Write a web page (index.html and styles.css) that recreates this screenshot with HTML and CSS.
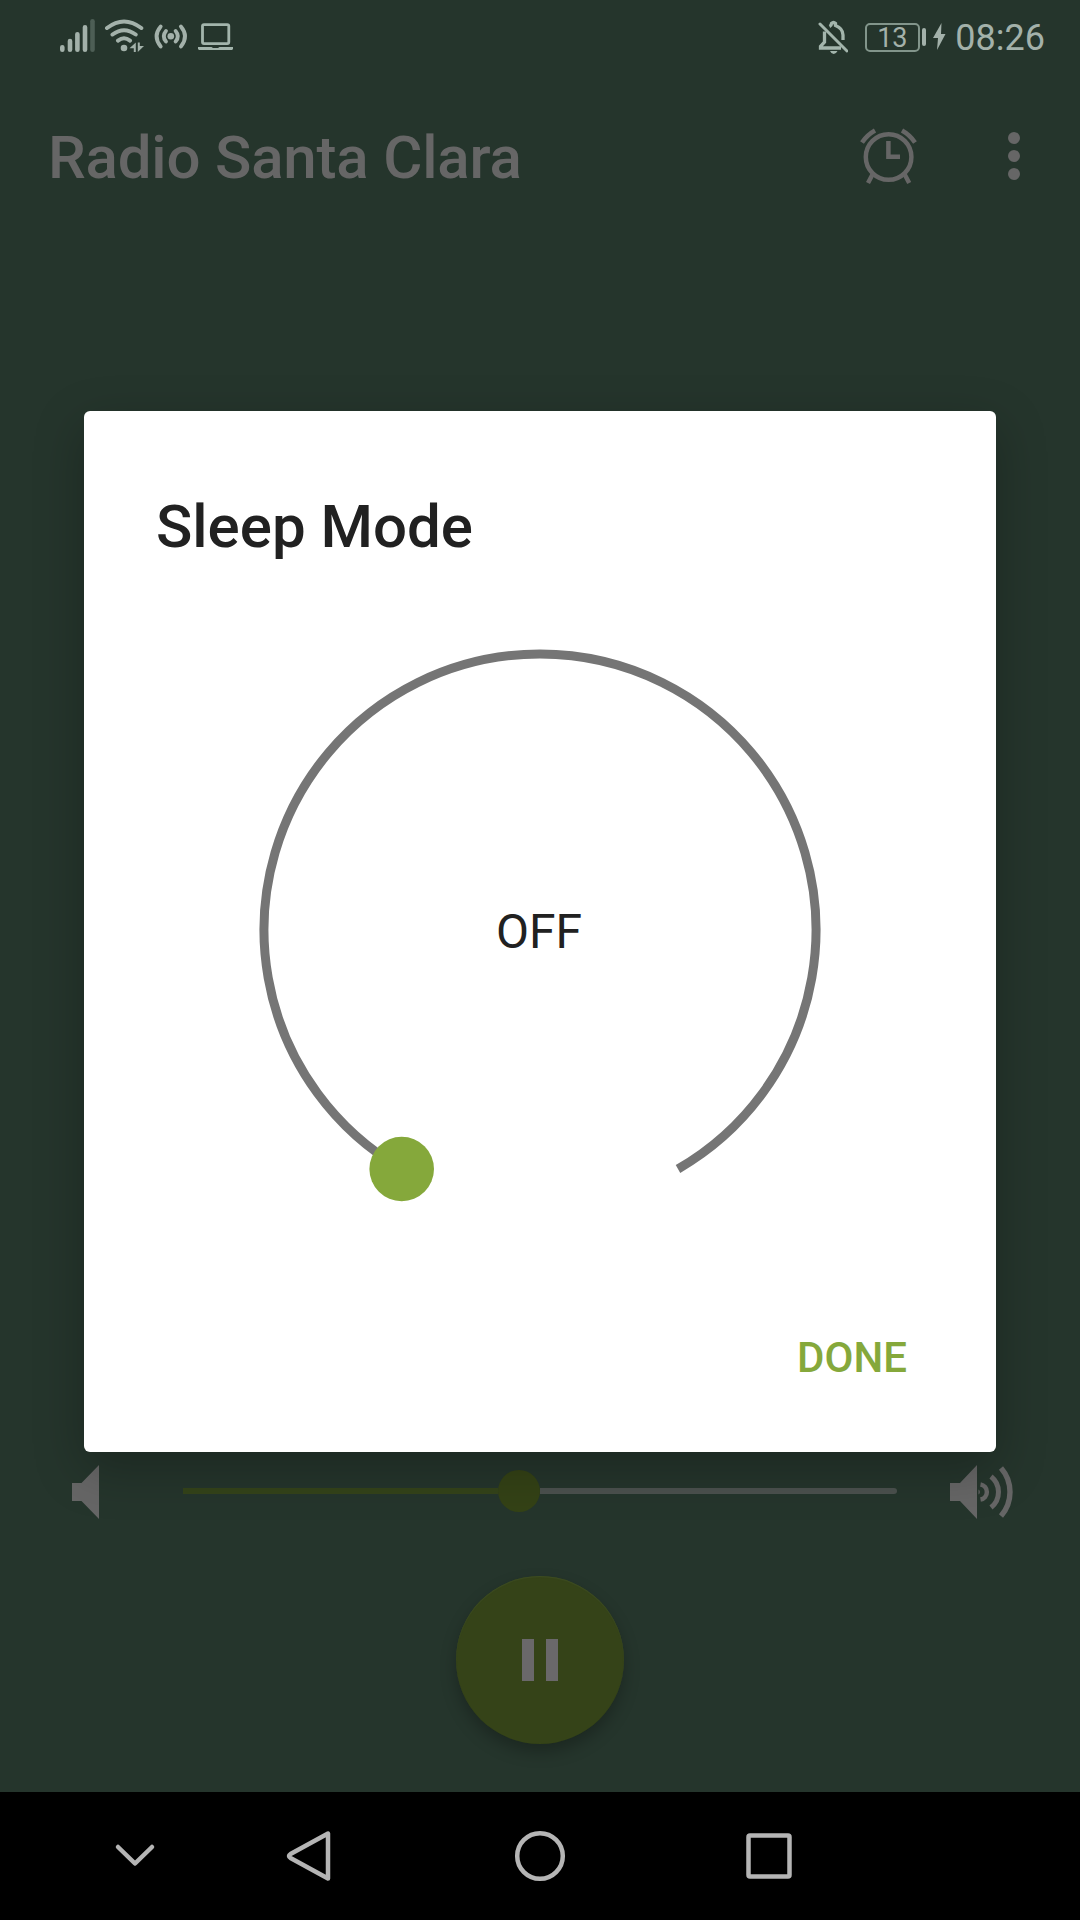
FILE: index.html
```
<!DOCTYPE html>
<html lang="en">
<head>
  <meta charset="UTF-8">
  <meta name="viewport" content="width=device-width, initial-scale=1.0">
  <title>Radio Santa Clara</title>
  <link rel="stylesheet" href="styles.css">
</head>
<body>
  <div class="screen">
    <div class="statusbar">
      <svg class="status-left" width="180" height="44" viewBox="58 14 180 44">
        <!-- signal -->
        <g stroke="#a3b1aa" stroke-width="4.6" stroke-linecap="round">
          <path d="M62.3 47.2V49.7M70 41V49.7M77.4 34.3V49.7M85 27.3V49.7"/>
          <path d="M92.5 21.3V49.7" stroke="#4d5e55"/>
        </g>
        <!-- wifi -->
        <g fill="none" stroke="#a3b1aa" stroke-width="4" stroke-linecap="round">
          <path d="M107 28Q124 15 141.3 28M112.5 34.5Q124 26 135.7 34.5M118 40.6Q124 36 130 40.6"/>
        </g>
        <circle cx="124" cy="48" r="3.3" fill="#a3b1aa"/>
        <path d="M129.5 48.3L135.8 42.5V52H133.8V48.3ZM137.8 42.5H139.8V46H144L137.8 52Z" fill="#a3b1aa"/>
        <!-- hotspot -->
        <circle cx="170.8" cy="36.3" r="3.3" fill="#a3b1aa"/>
        <g fill="none" stroke="#a3b1aa" stroke-width="3.8" stroke-linecap="round">
          <path d="M166 31Q161.5 36.3 166 41.6M175.6 31Q180.1 36.3 175.6 41.6"/>
          <path d="M160.7 26.5Q152.4 36.3 160.7 46.5M180.9 26.5Q189.2 36.3 180.9 46.5"/>
        </g>
        <!-- laptop -->
        <rect x="202.5" y="24.6" width="26.3" height="19" rx="1.5" fill="none" stroke="#a3b5ac" stroke-width="2.8"/>
        <path d="M198 47H211.5L213 48H218L219.5 47H233V49L232 50H199L198 49Z" fill="#a3b5ac"/>
      </svg>
      <div class="status-right">
        <svg width="30" height="36" viewBox="817 18 30 36">
          <g fill="none" stroke="#a3b5ac" stroke-width="3.3">
            <path d="M823.5 30.5V41L819.5 45.5V47H840M828.5 25.5Q830.5 24.5 830.5 22.5Q832.5 20.5 834.5 22.5V24.5Q842 27.5 842 34V39"/>
            <path d="M819 23L846 50" stroke-linecap="round" stroke-width="3"/>
          </g>
          <path d="M829 50H836.5Q835 53 832.7 53Q830.3 53 829 50Z" fill="#a3b5ac"/>
        </svg>
        <div class="battery">13</div>
        <div class="battery-tip"></div>
        <svg class="bolt" width="13" height="28" viewBox="0 0 13 28"><path d="M8.5 0L0 15H5L4 27L12.5 11H8Z" fill="#a3b1aa"/></svg>
        <div class="time">08:26</div>
      </div>
    </div>

    <div class="toolbar">
      <h1>Radio Santa Clara</h1>
      <svg class="alarm" width="58" height="58" viewBox="860 127 58 58">
        <g fill="none" stroke="#666" stroke-width="4.5">
          <circle cx="888.6" cy="157" r="22.8"/>
          <path d="M888.4 141V156.8H900"/>
          <path d="M862 142.5Q867 135 875 130.5M902 130.5Q910 135 915 142.5"/>
          <path d="M872.5 174.5L868 183M904.7 174.5L909.2 183"/>
        </g>
      </svg>
      <div class="menu"><span></span><span></span><span></span></div>
    </div>

    <div class="player">
      <div class="volume">
        <svg class="vol-low" width="27" height="54" viewBox="0 0 27 54"><path d="M0 18H9.5L27 0V54L9.5 36H0Z" fill="#666"/></svg>
        <div class="slider">
          <div class="slider-fill"></div>
          <div class="slider-thumb"></div>
          <div class="slider-rest"></div>
        </div>
        <svg class="vol-high" width="65" height="54" viewBox="0 0 65 54">
          <path d="M0 18H10L27 0V54L10 36H0Z" fill="#666"/>
          <g fill="none" stroke="#666" stroke-width="5">
            <path d="M30.5 19.5A7.6 7.6 0 0 1 30.5 34.5" stroke-width="4.5"/>
            <path d="M41 11.5A19.8 19.8 0 0 1 41 42.5"/>
            <path d="M51 3A36.5 36.5 0 0 1 51 51" stroke-width="5.4"/>
          </g>
          <path d="M28.5 24.5A3 3 0 0 1 28.5 29.5Z" fill="#666"/>
        </svg>
      </div>
      <div class="play"><i></i><i></i></div>
    </div>

    <div class="navbar">
      <svg width="42" height="26" viewBox="0 0 42 26"><path d="M4 4L21 20.5L38 4"/></svg>
      <svg width="48" height="54" viewBox="0 0 48 54"><path d="M43 4.5V49.5L5.5 29Q2.5 27 5.5 25Z"/></svg>
      <svg width="54" height="54" viewBox="0 0 54 54"><circle cx="27" cy="27" r="22.8"/></svg>
      <svg width="50" height="50" viewBox="0 0 50 50"><rect x="4.5" y="4.5" width="41" height="41" rx="1.5"/></svg>
    </div>
  </div>

  <div class="overlay">
    <div class="dialog">
      <h2>Sleep Mode</h2>
      <div class="dial">
        <svg width="570" height="570" viewBox="255 645 570 570">
          <path d="M402 1169A276 276 0 1 1 678 1169" fill="none" stroke="#757575" stroke-width="9"/>
          <circle cx="401.7" cy="1169" r="32.3" fill="#85a83b"/>
        </svg>
        <span class="dial-value">OFF</span>
      </div>
      <div class="actions"><button type="button">DONE</button></div>
    </div>
  </div>
</body>
</html>
```
FILE: styles.css
```
* { box-sizing: border-box; }
body {
  margin: 0;
  background-color: #25352c;
  font-family: Roboto, "Liberation Sans", sans-serif;
}
svg { display: block; flex: none; }
h1, h2 {
  margin: 0;
  font-size: 60px;
  font-weight: 500;
  line-height: 70px;
}
.screen {
  display: flex;
  flex-direction: column;
  width: 1080px;
  height: 1920px;
}

/* status bar */
.statusbar {
  display: flex;
  justify-content: space-between;
  height: 72px;
  padding: 14px 35px 0 58px;
  color: #a3b1aa;
}
.status-right {
  display: flex;
  align-items: center;
  height: 46px;
}
.battery {
  width: 55px;
  height: 29px;
  margin-left: 17px;
  border: 2px solid #82958b;
  border-radius: 5px;
  font-size: 27px;
  line-height: 26px;
  text-align: center;
}
.battery-tip {
  width: 4.5px;
  height: 18px;
  margin-left: 2px;
  border-radius: 2px;
  background-color: #a3b1aa;
}
.bolt { margin: 0 9px 0 7px; }
.time {
  padding-top: 2px;
  font-size: 36px;
  line-height: 42px;
}

/* toolbar */
.toolbar {
  display: flex;
  align-items: center;
  height: 168px;
  padding: 0 60px 0 48px;
  color: #666;
}
.toolbar h1 {
  padding-top: 4px;
  letter-spacing: -0.19px;
}
.alarm { margin-left: auto; }
.menu {
  display: flex;
  flex-direction: column;
  gap: 5.6px;
  margin-left: 90px;
}
.menu span {
  width: 12.4px;
  height: 12.4px;
  border-radius: 50%;
  background-color: #666;
}

/* player */
.player {
  flex: 1;
  display: flex;
  flex-direction: column;
  align-items: center;
  justify-content: flex-end;
  padding-bottom: 48px;
}
.volume {
  display: flex;
  align-items: center;
  width: 100%;
  padding: 0 65px 0 72px;
  margin-bottom: 57px;
}
.slider {
  flex: 1;
  display: flex;
  align-items: center;
  margin: 0 53px 2px 84px;
}
.slider-fill {
  width: 315px;
  height: 6px;
  background-color: #34431a;
}
.slider-thumb {
  width: 42px;
  height: 42px;
  border-radius: 50%;
  background-color: #344216;
}
.slider-rest {
  flex: 1;
  height: 6px;
  border-radius: 0 3px 3px 0;
  background-color: #4b514e;
}
.play {
  display: flex;
  align-items: center;
  justify-content: center;
  gap: 12px;
  width: 168px;
  height: 168px;
  border-radius: 50%;
  background-color: #354318;
  box-shadow: 0 8px 16px rgba(0, 0, 0, 0.25), inset 0 1px 1px #3d4c23;
}
.play i {
  width: 12px;
  height: 42px;
  background-color: #6a686a;
}

/* android buttons */
.navbar {
  display: flex;
  align-items: center;
  height: 128px;
  padding-left: 114px;
  background-color: #000;
}
.navbar svg {
  fill: none;
  stroke: #b5b5b5;
  stroke-width: 4.5;
  stroke-linecap: round;
  stroke-linejoin: round;
}
.navbar svg:nth-child(2) { margin-left: 129px; }
.navbar svg:nth-child(3) { margin-left: 180px; }
.navbar svg:nth-child(4) { margin-left: 177px; }

/* sleep dialog */
.overlay {
  position: absolute;
  top: 0;
  left: 0;
  width: 1080px;
  height: 1792px;
  padding: 411px 84px 0;
}
.dialog {
  display: flex;
  flex-direction: column;
  height: 1041px;
  padding: 81px 73px 58px 72px;
  border-radius: 6px;
  background-color: #fff;
  box-shadow: 0 16px 50px rgba(0, 0, 0, 0.25);
  color: #212121;
}
.dial {
  display: grid;
  place-items: center;
  margin: 83px -1px 0 0;
}
.dial svg, .dial-value { grid-area: 1 / 1; }
.dial-value {
  padding: 4px 2px 0 0;
  font-size: 48px;
  line-height: 56px;
}
.actions {
  display: flex;
  justify-content: flex-end;
  margin-top: auto;
}
button {
  padding: 12px 16px;
  border: none;
  background: none;
  color: #85a83b;
  font: 500 42px/49px Roboto, "Liberation Sans", sans-serif;
}
```
